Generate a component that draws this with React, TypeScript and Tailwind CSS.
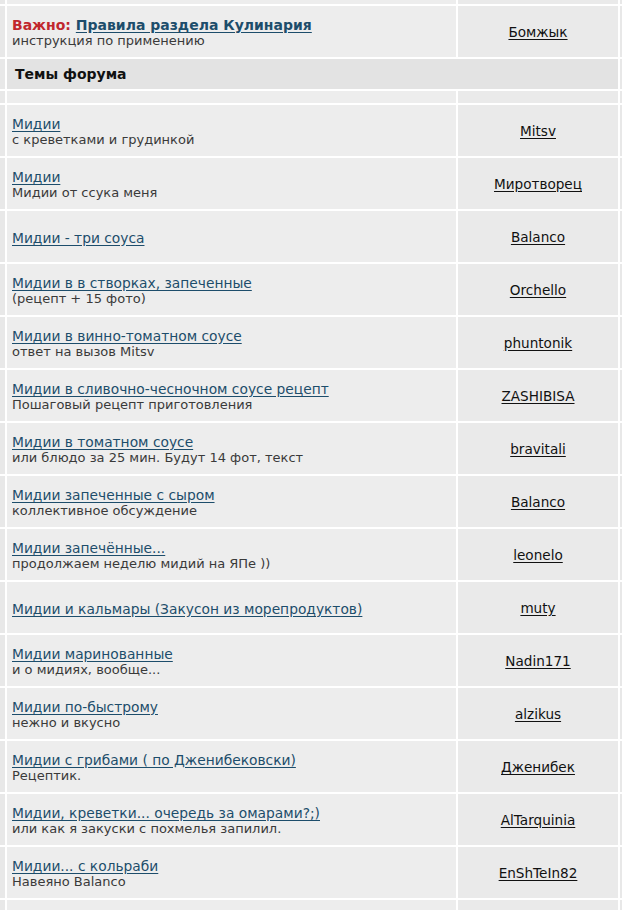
const topics: { title: string; sub?: string; author: string }[] = [
  { title: 'Мидии', sub: 'с креветками и грудинкой', author: 'Mitsv' },
  { title: 'Мидии', sub: 'Мидии от ссука меня', author: 'Миротворец' },
  { title: 'Мидии - три соуса', author: 'Balanco' },
  { title: 'Мидии в в створках, запеченные', sub: '(рецепт + 15 фото)', author: 'Orchello' },
  { title: 'Мидии в винно-томатном соусе', sub: 'ответ на вызов Mitsv', author: 'phuntonik' },
  { title: 'Мидии в сливочно-чесночном соусе рецепт', sub: 'Пошаговый рецепт приготовления', author: 'ZASHIBISA' },
  { title: 'Мидии в томатном соусе', sub: 'или блюдо за 25 мин. Будут 14 фот, текст', author: 'bravitali' },
  { title: 'Мидии запеченные с сыром', sub: 'коллективное обсуждение', author: 'Balanco' },
  { title: 'Мидии запечённые...', sub: 'продолжаем неделю мидий на ЯПе ))', author: 'leonelo' },
  { title: 'Мидии и кальмары (Закусон из морепродуктов)', author: 'muty' },
  { title: 'Мидии маринованные', sub: 'и о мидиях, вообще...', author: 'Nadin171' },
  { title: 'Мидии по-быстрому', sub: 'нежно и вкусно', author: 'alzikus' },
  { title: 'Мидии с грибами ( по Дженибековски)', sub: 'Рецептик.', author: 'Дженибек' },
  { title: 'Мидии, креветки... очередь за омарами?;)', sub: 'или как я закуски с похмелья запилил.', author: 'AlTarquinia' },
  { title: 'Мидии... с кольраби', sub: 'Навеяно Balanco', author: 'EnShTeIn82' },
];

function Edge() {
  return <div className="bg-[#e8e8e8]" />;
}

function TopicRow({ title, sub, author }: { title: string; sub?: string; author: string }) {
  return (
    <>
      <Edge />
      <div className="bg-[#ededed] px-[5px] pt-[2px] flex flex-col justify-center">
        <a href="#" className="text-[13.8px] leading-[16px] text-[#1d4d6b] underline underline-offset-2">
          {title}
        </a>
        {sub && <div className="text-[13px] leading-[16px] text-[#3a3a3a]">{sub}</div>}
      </div>
      <div className="bg-[#eaeaea] flex items-center justify-center pt-[1px]">
        <a href="#" className="text-[13.6px] text-[#111111] underline underline-offset-2">
          {author}
        </a>
      </div>
      <Edge />
    </>
  );
}

export default function App() {
  return (
    <div className="w-[622px] h-[910px] overflow-hidden bg-white font-['DejaVu_Sans',Verdana,sans-serif]">
      <div className="grid grid-cols-[5px_449px_160px_2px] auto-rows-[51px] grid-rows-[4px_51px_30px_12px] gap-[2px]">
        {/* top strip */}
        <Edge />
        <div className="bg-[#ededed]" />
        <div className="bg-[#eaeaea]" />
        <Edge />

        {/* important */}
        <Edge />
        <div className="bg-[#ededed] px-[5px] pt-[2px] flex flex-col justify-center">
          <div className="text-[14px] leading-[16px] font-bold">
            <span className="text-[#c1272d]">Важно:</span>{' '}
            <a href="#" className="text-[#1d4d6b] underline underline-offset-2">Правила раздела Кулинария</a>
          </div>
          <div className="text-[13px] leading-[16px] text-[#3a3a3a]">инструкция по применению</div>
        </div>
        <div className="bg-[#eaeaea] flex items-center justify-center pt-[1px]">
          <a href="#" className="text-[13.6px] text-[#111111] underline underline-offset-2">Бомжык</a>
        </div>
        <Edge />

        {/* header */}
        <Edge />
        <div className="col-span-2 bg-[#e3e3e3] flex items-center px-[8px]">
          <span className="text-[14px] font-bold text-[#111111]">Темы форума</span>
        </div>
        <Edge />

        {/* spacer */}
        <Edge />
        <div className="bg-[#ededed]" />
        <div className="bg-[#eaeaea]" />
        <Edge />

        {topics.map((t, i) => (
          <TopicRow key={i} {...t} />
        ))}

        <Edge />
        <div className="bg-[#ededed]" />
        <div className="bg-[#eaeaea]" />
        <Edge />
      </div>
    </div>
  );
}
